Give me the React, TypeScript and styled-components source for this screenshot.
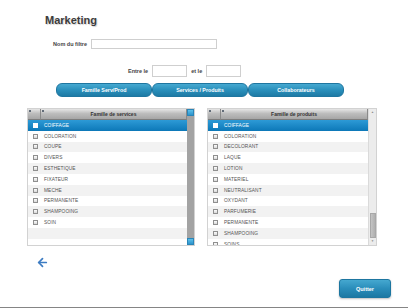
import styled, { createGlobalStyle } from "styled-components";
import { ArrowLeft } from "lucide-react";

const GlobalStyle = createGlobalStyle`
  html, body {
    margin: 0;
    padding: 0;
    background: #ffffff;
  }
  body {
    font-family: "Liberation Sans", Arial, sans-serif;
    color: #333;
  }
`;

const services = [
    "COIFFAGE", "COLORATION", "COUPE", "DIVERS", "ESTHETIQUE", "FIXATEUR",
    "MECHE", "PERMANENTE", "SHAMPOOING", "SOIN", "", "",
];

const produits = [
    "COIFFAGE", "COLORATION", "DECOLORANT", "LAQUE", "LOTION", "MATERIEL",
    "NEUTRALISANT", "OXYDANT", "PARFUMERIE", "PERMANENTE", "SHAMPOOING", "SOINS",
];

type ListProps = {
    title: string;
    items: string[];
    blueBar?: boolean;
};

const FamilyList = ({ title, items, blueBar }: ListProps) => (
    <ListBox>
        <Grid>
            <HeadRow>
                <HeadCheck><SortDot /></HeadCheck>
                <HeadLabel><SortDot />{title}</HeadLabel>
            </HeadRow>
            {items.map((item, index) => (
                <Row key={index} $selected={index === 0} $odd={index % 2 === 0}>
                    <CheckCell>{item ? <Box $selected={index === 0} /> : null}</CheckCell>
                    <LabelCell>{item}</LabelCell>
                </Row>
            ))}
        </Grid>
        {blueBar ? (
            <DarkScroll>
                <BlueArrow />
                <BlueArrow />
            </DarkScroll>
        ) : (
            <LightScroll>
                <ArrowGlyph>▲</ArrowGlyph>
                <Thumb />
                <ArrowGlyph>▼</ArrowGlyph>
            </LightScroll>
        )}
    </ListBox>
);

export default function App() {
    return <Page>
        <GlobalStyle />
        <Title>Marketing</Title>
        <FilterRow>
            <FieldLabel $width={87}>Nom du filtre</FieldLabel>
            <TextInput $width={126} $height={10} />
        </FilterRow>
        <DateRow>
            <FieldLabel>Entre le</FieldLabel>
            <TextInput $width={35} $height={12} />
            <FieldLabel>et le</FieldLabel>
            <TextInput $width={35} $height={12} />
        </DateRow>
        <TabBar>
            <TabButton>Famille Serv/Prod</TabButton>
            <TabButton>Services / Produits</TabButton>
            <TabButton>Collaborateurs</TabButton>
        </TabBar>
        <Lists>
            <FamilyList title="Famille de services" items={services} blueBar />
            <FamilyList title="Famille de produits" items={produits} />
        </Lists>
        <BackRow>
            <ArrowLeft size={13} strokeWidth={3.2} color="#3d7cc2" />
        </BackRow>
        <Footer>
            <QuitButton>Quitter</QuitButton>
        </Footer>
    </Page>
}

const Page = styled.div`
  width: 408px;
  height: 308px;
  display: flex;
  flex-direction: column;
  box-sizing: border-box;
  border-bottom: 1px solid #858585;
  overflow: hidden;
`;

const Title = styled.div`
  margin: 13px 0 0 45px;
  height: 14px;
  line-height: 14px;
  font-size: 11px;
  font-weight: bold;
  color: #3c3c3c;
  text-shadow: 1px 1px 1px rgba(0, 0, 0, 0.18);
`;

const FilterRow = styled.div`
  display: flex;
  align-items: center;
  gap: 4px;
  margin-top: 12px;
  height: 10px;
`;

const DateRow = styled.div`
  display: flex;
  align-items: center;
  gap: 4px;
  margin-top: 16px;
  padding-left: 128px;
  height: 12px;
`;

const FieldLabel = styled.span<{ $width?: number }>`
  ${p => p.$width ? `width: ${p.$width}px; text-align: right;` : ""}
  font-size: 5.5px;
  font-weight: bold;
  color: #444;
`;

const TextInput = styled.div<{ $width: number, $height: number }>`
  width: ${p => p.$width}px;
  height: ${p => p.$height}px;
  box-sizing: border-box;
  border: 1px solid #cfcfcf;
  background: #fff;
`;

const TabBar = styled.div`
  display: flex;
  margin-top: 6px;
  padding-left: 56px;
  height: 14px;
`;

const TabButton = styled.div`
  width: 96px;
  height: 14px;
  box-sizing: border-box;
  border-radius: 6px;
  background: linear-gradient(#46a9d1, #2a8fbb 50%, #1d7aa5);
  border: 1px solid #1f76a0;
  color: #fff;
  font-size: 5.3px;
  font-weight: bold;
  display: flex;
  align-items: center;
  justify-content: center;
`;

const Lists = styled.div`
  display: flex;
  gap: 12px;
  margin-top: 11px;
  padding-left: 27px;
  height: 138px;
`;

const ListBox = styled.div`
  display: flex;
  box-sizing: border-box;
  border: 1px solid #d2d2d2;
  &:first-child { width: 168px; }
  &:last-child { width: 170px; }
`;

const Grid = styled.div`
  flex: 1;
  overflow: hidden;
  background: linear-gradient(90deg, transparent 13px, #9a9a9a 13px, #9a9a9a 14px, transparent 14px);
`;

const HeadRow = styled.div`
  display: flex;
  height: 11px;
`;

const headBg = `
  background: linear-gradient(#e6e6e6, #bdbdbd 45%, #a6a6a6);
  border-right: 1px solid #8a8a8a;
  border-bottom: 1px solid #7d7d7d;
  box-sizing: border-box;
  position: relative;
`;

const HeadCheck = styled.div`
  ${headBg}
  width: 13px;
`;

const HeadLabel = styled.div`
  ${headBg}
  flex: 1;
  font-size: 5px;
  font-weight: bold;
  color: #333;
  display: flex;
  align-items: center;
  justify-content: center;
`;

const SortDot = styled.span`
  position: absolute;
  left: 1px;
  top: 1px;
  width: 2px;
  height: 2px;
  border-radius: 1px;
  background: #3c4a5a;
`;

const Row = styled.div<{ $selected: boolean, $odd: boolean }>`
  display: flex;
  height: 10.8px;
  align-items: center;
  background: ${p => p.$selected ? "linear-gradient(#2d9ad6, #0c78b8)" : p.$odd ? "#f2f2f2" : "#ffffff"};
  color: ${p => p.$selected ? "#ffffff" : "#555"};
`;

const CheckCell = styled.div`
  width: 14px;
  display: flex;
  justify-content: center;
`;

const Box = styled.span<{ $selected: boolean }>`
  width: 5px;
  height: 5px;
  box-sizing: border-box;
  border: 1px solid ${p => p.$selected ? "#ffffff" : "#8f8f8f"};
  background: ${p => p.$selected ? "#ffffff" : "linear-gradient(#fdfdfd, #d8d8d8)"};
`;

const LabelCell = styled.div`
  padding-left: 2px;
  font-size: 4.8px;
  letter-spacing: 0.1px;
`;

const DarkScroll = styled.div`
  width: 7px;
  background: #a3a3a3;
  display: flex;
  flex-direction: column;
  justify-content: space-between;
`;

const BlueArrow = styled.div`
  height: 7px;
  background: linear-gradient(#5cc0ea, #2d94cc);
  border: 1px solid #2a85b8;
  box-sizing: border-box;
`;

const LightScroll = styled.div`
  width: 8px;
  background: #ececec;
  border-left: 1px solid #dadada;
  box-sizing: border-box;
  display: flex;
  flex-direction: column;
  align-items: center;
`;

const ArrowGlyph = styled.span`
  font-size: 3px;
  line-height: 7px;
  color: #8a8a8a;
`;

const Thumb = styled.div`
  margin-top: auto;
  width: 6px;
  height: 25px;
  background: linear-gradient(90deg, #c4c4c4, #b0b0b0);
  border: 1px solid #a8a8a8;
  box-sizing: border-box;
`;

const BackRow = styled.div`
  margin-top: 10px;
  padding-left: 36px;
  height: 13px;
  display: flex;
`;

const Footer = styled.div`
  display: flex;
  justify-content: flex-end;
  padding-right: 17px;
  margin-top: 10px;
`;

const QuitButton = styled.div`
  width: 52px;
  height: 19px;
  box-sizing: border-box;
  border-radius: 3px;
  border: 1px solid #1d76a0;
  background: linear-gradient(#45a8d0, #2a8dba 50%, #1c78a3);
  box-shadow: 0 1px 2px rgba(0, 0, 0, 0.25);
  color: #fff;
  font-size: 5.5px;
  font-weight: bold;
  display: flex;
  align-items: center;
  justify-content: center;
`;
